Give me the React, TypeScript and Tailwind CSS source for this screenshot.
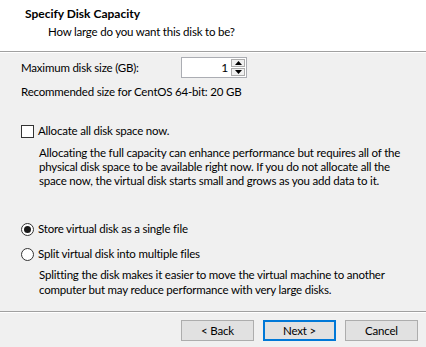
import React from "react";

function Checkbox() {
  return <div className="w-[13px] h-[13px] border border-[#333333] bg-white shrink-0" />;
}

function Radio({ checked }: { checked?: boolean }) {
  return (
    <div className="w-[13px] h-[13px] rounded-full border border-[#333333] bg-white shrink-0 flex items-center justify-center">
      {checked && <div className="w-[7px] h-[7px] rounded-full bg-[#1a1a1a]" />}
    </div>
  );
}

function Spinner() {
  return (
    <div className="flex h-[21px] w-[66px] border border-[#abadb3] bg-white">
      <div className="flex-1 flex items-center justify-end pr-[3px] text-[12px] leading-none text-black">1</div>
      <div className="w-[15px] flex flex-col gap-[1px] py-[1px] pr-[1px]">
        <div className="flex-1 bg-[#f0f0f0] border border-[#acacac] flex items-center justify-center">
          <svg width="7" height="4" viewBox="0 0 7 4"><path d="M0 4 L3.5 0 L7 4 Z" fill="#000" /></svg>
        </div>
        <div className="flex-1 bg-[#f0f0f0] border border-[#acacac] flex items-center justify-center">
          <svg width="7" height="4" viewBox="0 0 7 4"><path d="M0 0 L3.5 4 L7 0 Z" fill="#000" /></svg>
        </div>
      </div>
    </div>
  );
}

function Button({ label, focused }: { label: string; focused?: boolean }) {
  return (
    <div
      className={
        "w-[73px] h-[21px] flex items-center justify-center leading-none bg-[#e1e1e1] text-black " +
        (focused ? "border-2 border-[#0078d7]" : "border border-[#adadad]")
      }
    >
      {label}
    </div>
  );
}

export default function App() {
  return (
    <div
      className="w-[426px] h-[347px] bg-[#f0f0f0] text-black overflow-hidden flex flex-col text-[11.5px] tracking-[-0.2px] whitespace-nowrap"
      style={{ fontFamily: 'Lato, "Noto Sans", sans-serif' }}
    >
      <div className="h-[51px] bg-white pt-[6px] pl-[25px] shrink-0">
        <div className="font-bold leading-[16px] text-[12px] tracking-normal">Specify Disk Capacity</div>
        <div className="leading-[16px] mt-[2px] pl-[23px]">How large do you want this disk to be?</div>
      </div>
      <div className="h-[1px] bg-[#a0a0a0] shrink-0" />
      <div className="h-[1px] bg-white shrink-0" />

      <div className="pl-[21px] flex flex-col h-[258px] shrink-0 overflow-hidden">
        <div className="flex items-center mt-[4px] h-[21px]">
          <div className="w-[160px] leading-[16px]">Maximum disk size (GB):</div>
          <Spinner />
        </div>
        <div className="mt-[6px] leading-[16px]">Recommended size for CentOS 64-bit: 20 GB</div>

        <div className="mt-[23px] flex items-center gap-[4px] leading-[16px]">
          <Checkbox />
          <span>Allocate all disk space now.</span>
        </div>
        <div className="mt-[7px] pl-[18px] leading-[14px]">
          Allocating the full capacity can enhance performance but requires all of the
          <br />
          physical disk space to be available right now. If you do not allocate all the
          <br />
          space now, the virtual disk starts small and grows as you add data to it.
        </div>

        <div className="mt-[33px] flex items-center gap-[4px] leading-[16px]">
          <Radio checked />
          <span>Store virtual disk as a single file</span>
        </div>
        <div className="mt-[9px] flex items-center gap-[4px] leading-[16px]">
          <Radio />
          <span>Split virtual disk into multiple files</span>
        </div>
        <div className="mt-[5px] pl-[18px] leading-[15px]">
          Splitting the disk makes it easier to move the virtual machine to another
          <br />
          computer but may reduce performance with very large disks.
        </div>
      </div>

      <div className="h-[1px] bg-[#a0a0a0] shrink-0" />
      <div className="h-[1px] bg-white shrink-0" />
      <div className="h-[34px] flex items-start justify-end gap-[9px] pr-[8px] pt-[7px] shrink-0">
        <Button label="< Back" />
        <Button label="Next >" focused />
        <Button label="Cancel" />
      </div>
    </div>
  );
}
